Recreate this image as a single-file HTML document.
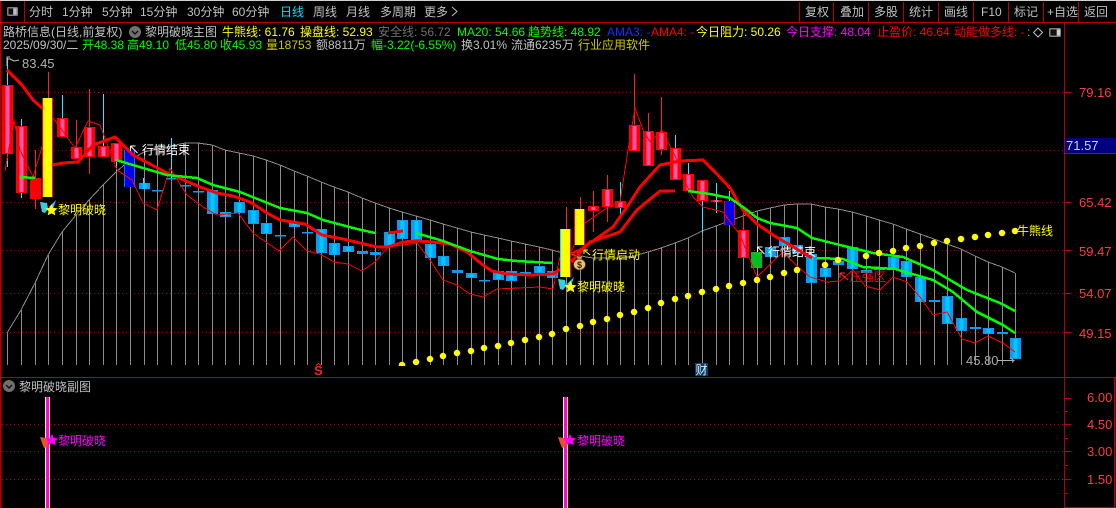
<!DOCTYPE html>
<html lang="zh"><head><meta charset="utf-8"><title>路桥信息</title>
<style>
html,body{margin:0;padding:0;background:#000;width:1116px;height:508px;overflow:hidden}
svg{display:block;font-family:"Liberation Sans","WenQuanYi Zen Hei","Noto Sans CJK SC",sans-serif;font-size:12px}
.g{fill:#c0c0c0}.y{fill:#ffff00}.l{fill:#00ff00}.dy{fill:#c8c800}.rr{fill:#ff0000}.m{fill:#ff00ff}
.ax{fill:#ff3c3c;font-size:13px}
.grid{stroke:#b00000;stroke-width:1;stroke-dasharray:1 3;fill:none}
.ln{fill:none;stroke-linejoin:round;shape-rendering:crispEdges}
</style></head><body>
<svg width="1116" height="508" viewBox="0 0 1116 508" xmlns="http://www.w3.org/2000/svg">
<rect width="1116" height="508" fill="#000"/>
<rect width="1116" height="1" fill="#d0d0d0"/>

<!-- frame -->
<g fill="#b40000">
<rect x="0" y="1" width="1.5" height="507"/>
<rect x="24" y="1" width="1" height="21"/>
<rect x="0" y="22" width="1116" height="1"/>
<rect x="0" y="377" width="1116" height="1"/>
<rect x="1064" y="22" width="1" height="486"/>
<rect x="1114" y="378" width="1.5" height="130"/>
<rect x="1064" y="507" width="52" height="1"/>
<rect x="799" y="2" width="1" height="20"/><rect x="833" y="2" width="1" height="20"/><rect x="868" y="2" width="1" height="20"/><rect x="903" y="2" width="1" height="20"/><rect x="938" y="2" width="1" height="20"/><rect x="973" y="2" width="1" height="20"/><rect x="1008" y="2" width="1" height="20"/><rect x="1043" y="2" width="1" height="20"/><rect x="1078" y="2" width="1" height="20"/>
</g>

<!-- toolbar -->
<rect x="7" y="7" width="11" height="9" rx="1.5" fill="#808080"/><rect x="8.5" y="8.5" width="4.5" height="6" fill="#111"/><rect x="13.5" y="8.5" width="3" height="6" fill="#c0c0c0"/>
<g class="g">
<text x="29" y="16">分时</text><text x="62" y="16">1分钟</text><text x="102" y="16">5分钟</text><text x="140" y="16">15分钟</text><text x="187" y="16">30分钟</text><text x="232" y="16">60分钟</text>
<text x="280" y="16" style="fill:#00e0ff">日线</text><text x="313" y="16">周线</text><text x="346" y="16">月线</text><text x="380" y="16">多周期</text><text x="424" y="16">更多</text>
<text x="805" y="16">复权</text><text x="840" y="16">叠加</text><text x="874" y="16">多股</text><text x="909" y="16">统计</text><text x="944" y="16">画线</text><text x="981" y="16">F10</text><text x="1014" y="16">标记</text><text x="1047" y="16">+自选</text><text x="1084" y="16">返回</text>
</g>
<path d="M452 7l5 4.5-5 4.5" fill="none" stroke="#c0c0c0"/>

<!-- info row 2 -->
<text class="g" x="3" y="36">路桥信息(日线,前复权)</text>
<circle cx="135" cy="32" r="6" fill="#707070"/><path d="M132 31l3 3 3-3" fill="none" stroke="#111" stroke-width="1.4"/>
<text class="g" x="145" y="36">黎明破晓主图</text>
<text class="y" x="222" y="36">牛熊线: 61.76</text>
<text class="y" x="300" y="36">操盘线: 52.93</text>
<text x="378" y="36" fill="#707070">安全线: 56.72</text>
<text class="l" x="457" y="36">MA20: 54.66</text>
<text class="l" x="528" y="36">趋势线: 48.92</text>
<text x="607" y="36" fill="#1030ff">AMA3: -</text>
<text class="rr" x="651" y="36">AMA4: -</text>
<text class="y" x="696" y="36">今日阻力: 50.26</text>
<text class="m" x="786" y="36">今日支撑: 48.04</text>
<text class="rr" x="877" y="36">止盈价: 46.64</text>
<text class="rr" x="954" y="36">动能做多线: -</text>
<text class="l" x="1027" y="36">:</text>
<path d="M1038 28l4.5 4.5-4.5 4.5-4.5-4.5z" fill="none" stroke="#c0c0c0"/>
<rect x="1049" y="28" width="12" height="9" rx="1.5" fill="#808080"/><rect x="1050.5" y="29.5" width="6" height="6" fill="#111"/><rect x="1057" y="29.5" width="3" height="6" fill="#d0d0d0"/>

<!-- info row 3 -->
<text class="g" x="3" y="49">2025/09/30/二</text>
<text class="l" x="82" y="49">开48.38</text><text class="l" x="127" y="49">高49.10</text><text class="l" x="175" y="49">低45.80</text><text class="l" x="220" y="49">收45.93</text>
<text class="dy" x="266" y="49">量18753</text>
<text class="g" x="316" y="49">额8811万</text>
<text class="l" x="371" y="49">幅-3.22(-6.55%)</text>
<text class="g" x="461" y="49">换3.01%</text><text class="g" x="511" y="49">流通6235万</text>
<text class="dy" x="578" y="49">行业应用软件</text>

<!-- grid -->
<path class="grid" d="M2 92.5H1064M2 150.5H1064M2 202.5H1064M2 250.5H1064M2 293.5H1064M2 332.5H1064M2 424.5H1064M2 451.5H1064M2 479.5H1064"/>

<!-- ticks + axis labels -->
<path d="M1065 92.5h6M1065 202.5h6M1065 250.5h6M1065 293.5h6M1065 332.5h6M1065 398.5h6M1065 411.5h3M1065 424.5h6M1065 438.5h3M1065 451.5h6M1065 465.5h3M1065 479.5h6M1065 493.5h3" stroke="#c00000" fill="none"/>
<g class="ax"><text x="1079" y="97">79.16</text><text x="1079" y="207">65.42</text><text x="1079" y="256">59.47</text><text x="1079" y="298">54.07</text><text x="1079" y="338">49.15</text>
<text x="1087" y="402">6.00</text><text x="1087" y="429">4.50</text><text x="1087" y="456">3.00</text><text x="1087" y="484">1.50</text></g>
<rect x="1065" y="138" width="51" height="15" fill="#000080"/><rect x="1065" y="153" width="51" height="1" fill="#c00000"/>
<text x="1066" y="150" fill="#d0d0d0" font-size="13">71.57</text>

<!-- vertical gray lines -->
<path fill="none" stroke="#8c8c8c" d="M7.5 333V365M21.5 310V365M35.5 283V365M48.5 255V365M62.5 232V365M76.5 215V365M89.5 200V365M103.5 185V365M116.5 172V365M130.5 160V365M144.5 152V365M157.5 149V365M171.5 146V365M185.5 143V365M198.5 143V365M212.5 145V365M225.5 150V365M239.5 153V365M253.5 156V365M266.5 160V365M280.5 165V365M294.5 171V365M307.5 176V365M321.5 182V365M334.5 187V365M348.5 192V365M362.5 198V365M375.5 203V365M389.5 208V365M402.5 212V365M416.5 216V365M430.5 220V365M443.5 224V365M457.5 228V365M471.5 232V365M484.5 235V365M498.5 238V365M511.5 241V365M525.5 244V365M539.5 247V365M552.5 250V365M566.5 254V365M580.5 256V365M593.5 258V365M607.5 258V365M620.5 258V365M634.5 256V365M648.5 252V365M661.5 248V365M675.5 243V365M688.5 238V365M702.5 231V365M716.5 226V365M729.5 221V365M743.5 216V365M757.5 211V365M770.5 208V365M784.5 205V365M797.5 204V365M811.5 204V365M825.5 207V365M838.5 209V365M852.5 212V365M866.5 216V365M879.5 220V365M893.5 224V365M906.5 229V365M920.5 234V365M934.5 239V365M947.5 244V365M961.5 249V365M975.5 256V365M988.5 262V365M1002.5 267V365M1015.5 273V359"/>
<!-- gray envelope -->
<path class="ln" stroke="#8c8c8c" d="M7 333L21 310 35 283 48 255 62 232 76 215 89 200 103 185 116 172 130 160 144 152 157 149 171 146 185 143 198 143 212 145 225 150 239 153 253 156 266 160 280 165 294 171 307 176 321 182 334 187 348 192 362 198 375 203 389 208 402 212 416 216 430 220 443 224 457 228 471 232 484 235 498 238 511 241 525 244 539 247 552 250 566 254 580 256 593 258 607 258 620 258 634 256 648 252 661 248 675 243 688 238 702 231 716 226 729 221 743 216 757 211 770 208 784 205 797 204 811 204 825 207 838 209 852 212 866 216 879 220 893 224 906 229 920 234 934 239 947 244 961 249 975 256 988 262 1002 267 1015 273"/>

<!-- wicks -->
<path fill="none" stroke="#40e0ff" d="M7.5 58V167M21.5 119V198M62.5 95V118M103.5 94V146M116.5 143V171M171.5 138V178M620.5 182V215M675.5 135V148M688.5 163V174M702.5 180V233M716.5 183V213M729.5 191V201M143.5 178V183"/>
<path fill="none" stroke="#ff2020" d="M35.5 150V209M48.5 72V98M76.5 120V159M89.5 89V174M566.5 207V229M580.5 197V209M593.5 191V232M607.5 175V222M634.5 74V125M648.5 113V131M661.5 97V155M743.5 213V230"/>

<!-- red candles -->
<path fill="none" stroke="#ff0000" stroke-width="11" d="M7.5 85V154M21.5 126V193M35.5 178V199M62.5 118V137M76.5 147V159M89.5 127V157M103.5 146V157M116.5 143V162M593.5 206V211M607.5 189V207M620.5 201V208M634.5 125V151M648.5 131V166M661.5 132V150M675.5 148V180M688.5 174V191M702.5 180V201M716.5 200V202M743.5 230V258"/>
<path fill="none" stroke="#ff55aa" stroke-width="4" d="M7.5 86V153M21.5 127V192M62.5 119V136M76.5 148V158M89.5 128V156M103.5 147V156M116.5 144V161M593.5 207V210M607.5 190V206M620.5 202V207M634.5 126V150M648.5 132V165M661.5 133V149M675.5 149V179M688.5 175V190M702.5 181V200M716.5 200V202M743.5 231V257"/>

<!-- blue candles -->
<path fill="none" stroke="#0a9cf5" stroke-width="11" d="M144.5 183V189M157.5 190V191.5M171.5 178V179.5M185.5 185V186.5M198.5 191V192.5M212.5 190V214M225.5 212V217M239.5 202V213M253.5 210V224M266.5 223V234M280.5 235V236.5M294.5 223V227M307.5 232V233.5M321.5 229V253M334.5 243V255M348.5 246V252M362.5 251V254M375.5 252V255M389.5 232V246M402.5 220V239M416.5 220V240M430.5 244V258M443.5 256V266M457.5 270V273M471.5 273V278M484.5 280V281.5M498.5 271V280M511.5 271V281M525.5 272V276M539.5 266V273M552.5 271V278M770.5 247V257M784.5 237V246M797.5 245V253M811.5 254V283M825.5 268V277M838.5 261V265M852.5 247V269M866.5 270V273M879.5 268V270M893.5 257V269M906.5 261V277M920.5 277V302M934.5 300V302M947.5 296V324M961.5 318V331M975.5 327V329M988.5 328V334M1002.5 332V334M1015.5 338V359"/>
<path fill="none" stroke="#00c8ff" stroke-width="4" d="M144.5 183V189M212.5 191V213M225.5 213V216M239.5 203V212M253.5 211V223M266.5 224V233M294.5 224V226M321.5 230V252M334.5 244V254M348.5 247V251M389.5 233V245M402.5 221V238M416.5 221V239M430.5 245V257M443.5 257V265M471.5 274V277M498.5 272V279M511.5 272V280M525.5 273V275M539.5 267V272M552.5 272V277M770.5 248V256M784.5 238V245M811.5 255V282M825.5 269V276M852.5 248V268M893.5 258V268M906.5 262V276M920.5 278V301M947.5 297V323M961.5 319V330M988.5 329V333M1015.5 339V358"/>

<!-- blue / green special -->
<rect x="124" y="150" width="11" height="37" fill="#0000f0"/><rect x="124" y="150" width="1" height="37" fill="#0a70f5"/><rect x="134" y="150" width="1" height="37" fill="#0a70f5"/>
<rect x="724" y="201" width="11" height="24" fill="#0000f0"/><rect x="724" y="201" width="1" height="24" fill="#e00040"/><rect x="734" y="201" width="1" height="24" fill="#e00040"/>
<rect x="751" y="252" width="11" height="16" fill="#00c020"/>

<!-- thin red -->
<path class="ln" stroke="#ff0000" d="M5 171L14 120 20 150 33 177 42 147 53 118 62 130 75 148 88 121 100 125 105 138 117 170 132 180 143 203 157 210 170 168 187 195 203 207 217 215 238 213 253 233 279 251 293 237 307 251 320 254 334 262 348 264 362 271 375 262 388 247 403 245 417 243 430 260 443 280 457 285 470 294 483 297 497 289 540 287 553 289 560 257 572 250 585 223 608 207 620 202 628 150 635 108 643 130 650 142 662 130 677 160 682 177 693 197 703 207 723 212 740 235 757 277 783 252 798 267 810 277 827 282 840 281 853 270 865 286 880 290 893 277 907 282 920 297 933 315 947 312 962 339 975 343 988 336 1003 343 1015 352"/>

<!-- thick red -->
<path class="ln" stroke="#ff0000" stroke-width="3" d="M7 70L22 85 33 100 42 108 48 112M53 165L63 163 78 162 93 145 115 137 133 155 167 173 200 187 217 193 233 196 250 202 267 213 280 220 305 224 322 235 343 239 360 243 377 247 388 247 403 242 417 241 433 242 450 244 467 252 483 265 492 271 507 274 530 275 553 274 560 269M571 254L580 250 613 227 627 207 640 187 660 165 680 161 703 160 713 170 730 188 743 210 757 224 773 235 790 245 812 258M571 262L590 242 620 232 637 210 660 191 675 191M388 233L403 231"/>

<!-- green -->
<path class="ln" stroke="#00ff00" stroke-width="2.5" d="M20 177L35 178M116 160L143 168 167 175 197 178 213 185 240 192 280 208 307 213 323 220 357 229 375 233M416 233L443 241 470 251 498 259 517 261 552 263M688 191L710 194 730 198 747 210 757 218 770 223 797 228 812 238 840 245 873 253 903 257 933 270 967 290 1000 303 1015 311M817 258L843 259 863 267 895 269 933 280 953 292 977 312 1003 325 1015 333"/>

<!-- yellow candles (over the lines) -->
<rect x="42" y="98" width="11" height="99" fill="#ff0000"/><rect x="43" y="98" width="9" height="99" fill="#ffff00"/>
<rect x="560" y="229" width="11" height="48" fill="#ff0000"/><rect x="561" y="229" width="9" height="48" fill="#ffff00"/><rect x="560" y="229" width="1" height="48" fill="#20e0ff"/>
<rect x="574" y="209" width="11" height="36" fill="#ff0000"/><rect x="575" y="209" width="9" height="36" fill="#ffff00"/>

<!-- yellow dots -->
<path fill="none" stroke="#ffff00" stroke-width="6.5" stroke-linecap="round" d="M402 365h0M416 362h0M430 359h0M443 356h0M457 353h0M471 351h0M484 348h0M498 346h0M511 343h0M525 340h0M539 337h0M552 334h0M566 329h0M580 326h0M593 322h0M607 319h0M620 315h0M634 312h0M648 308h0M661 303h0M675 299h0M688 296h0M702 292h0M716 289h0M729 286h0M743 283h0M757 280h0M770 277h0M784 273h0M797 270h0M825 265h0M838 260h0M866 256h0M879 253h0M893 251h0M906 248h0M920 246h0M934 243h0M947 241h0M961 239h0M975 237h0M988 235h0M1002 233h0M1015 231h0"/>
<rect x="395" y="366" width="16" height="10" fill="#000"/>

<!-- chart labels -->
<path d="M7 66V57h3M7 59h4M10 59l4 2 5-1" fill="none" stroke="#c0c0c0"/>
<text x="22" y="68" font-size="13" fill="#b0b0b0">83.45</text>

<!-- first dawn marker -->
<path d="M40 202l7 1 1 6-3 4-3-1-1-5zM49 207l7-7-2 6-3 5z" fill="#30d0e0"/>
<path d="M51.500 204l1.800 3.900 4.200.5-3.100 2.800.9 4.200-3.800-2.100-3.800 2.100.9-4.200-3.100-2.800 4.200-.5z" fill="#ffff00"/>
<text class="y" x="58" y="214">黎明破晓</text>

<path d="M130.500 146l7 7M130.500 146v5M130.500 146h5" fill="none" stroke="#fff"/>
<text x="142" y="154" fill="#fff">行情结束</text>

<!-- second dawn marker -->
<path d="M558 279l7 1 1 6-3 4-3-1-1-5zM567 284l7-7-2 6-3 5z" fill="#30d0e0"/>
<path d="M570.500 281l1.800 3.900 4.200.5-3.100 2.800.9 4.200-3.800-2.100-3.800 2.100.9-4.200-3.100-2.800 4.200-.5z" fill="#ffff00"/>
<text class="y" x="577" y="291">黎明破晓</text>

<!-- money bag -->
<ellipse cx="579.500" cy="264.500" rx="6" ry="5.500" fill="#e8c27a" stroke="#5a3a10" stroke-width=".8"/>
<path d="M576 255l3.500 2 3.500-2-1.500 4h-4z" fill="#d8a050" stroke="#5a3a10" stroke-width=".6"/>
<text x="577" y="268" font-size="9" fill="#402000" font-weight="bold">$</text>
<path d="M584 250l6 5M584 250v4M584 250h4" fill="none" stroke="#ffff00"/>
<text class="y" x="592" y="259">行情启动</text>

<path d="M757.500 247l7 7M757.500 247v5M757.500 247h5" fill="none" stroke="#fff"/>
<text x="768" y="256" fill="#fff">行情结束</text>
<path class="ln" stroke="#ff0000" stroke-width="3" d="M790 245L812 258"/>

<path d="M840 273l8 7M840 273v5M840 273h5" fill="none" stroke="#ff3030"/>
<text class="rr" x="850" y="281">压强区</text>

<text class="y" x="1017" y="235">牛熊线</text>

<text x="966" y="365" font-size="13" fill="#a8a8a8">45.80</text>
<path d="M997 360.500h17M1010 358l4 2.500-2 2" fill="none" stroke="#b0b0b0"/>

<!-- markers bottom -->
<text x="314" y="375" font-size="13" fill="#ff2020" font-weight="bold">S</text>
<path d="M316 365.500l2.500-2 2.500 2" fill="none" stroke="#ff2020"/>
<rect x="695" y="363" width="13" height="13" fill="#004070"/>
<text x="695.500" y="374" fill="#e8e8e8">财</text>

<!-- sub chart -->
<circle cx="9" cy="386" r="6" fill="#707070"/><path d="M6 385l3 3 3-3" fill="none" stroke="#111" stroke-width="1.4"/>
<text class="g" x="19" y="391">黎明破晓副图</text>

<rect x="45" y="397" width="5" height="111" fill="#ff00ff"/><rect x="45" y="397" width="1" height="111" fill="#ffff60"/><rect x="49" y="397" width="1" height="111" fill="#ffff60"/>
<rect x="563" y="397" width="5" height="111" fill="#ff00ff"/><rect x="563" y="397" width="1" height="111" fill="#ffff60"/><rect x="567" y="397" width="1" height="111" fill="#ffff60"/>
<path d="M40 437l6 1 2 4-1 5-3 1-2-5z" fill="#e85030"/>
<path d="M52 434l1.800 3.900 4.200.5-3.100 2.800.9 4.200-3.800-2.100-3.800 2.100.9-4.200-3.100-2.800 4.200-.5z" fill="#ff00ff"/>
<text class="m" x="58" y="445">黎明破晓</text>
<path d="M558 437l6 1 2 4-1 5-3 1-2-5z" fill="#e85030"/>
<path d="M570 434l1.800 3.900 4.200.5-3.100 2.800.9 4.200-3.800-2.100-3.800 2.100.9-4.200-3.100-2.800 4.200-.5z" fill="#ff00ff"/>
<text class="m" x="577" y="445">黎明破晓</text>
</svg>
</body></html>
